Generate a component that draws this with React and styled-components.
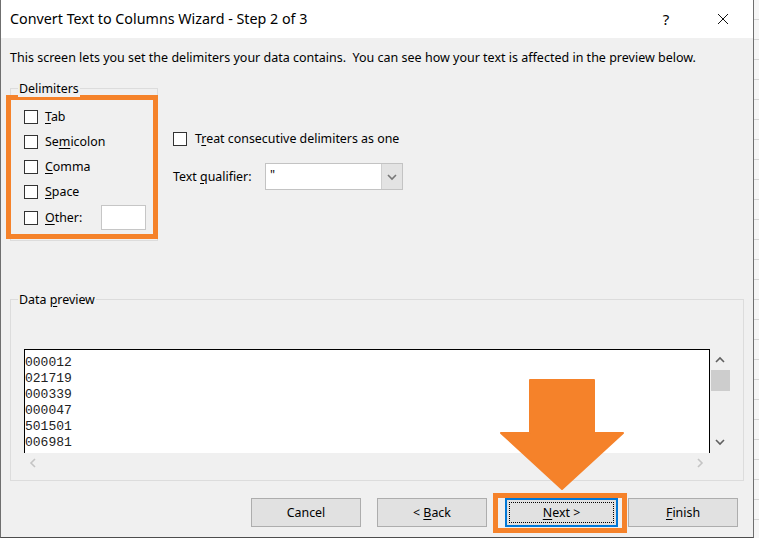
import React from 'react';
import styled, { createGlobalStyle } from 'styled-components';

const UI = '"Noto Sans", "Open Sans", "DejaVu Sans", sans-serif';
const MONO = '"Liberation Mono", "Courier New", monospace';
const ORANGE = '#f5822a';
const FS = '12.4px';

const Global = createGlobalStyle`
  html, body { margin: 0; padding: 0; }
  body { background: #ececec; font-family: ${UI}; color: #000; }
`;

const Screen = styled.div`
  position: relative;
  width: 759px;
  height: 538px;
  display: flex;
  overflow: hidden;
  background: #f6f6f6 repeating-linear-gradient(180deg, transparent 0 19px, #d4d4d4 19px 20px);
`;

const Dialog = styled.div`
  width: 754px;
  height: 538px;
  flex: none;
  box-sizing: border-box;
  border-left: 1px solid #6f6f6f;
  border-right: 1px solid #6f6f6f;
  border-bottom: 1px solid #4d4d4d;
  background: #f0f0f0;
  display: flex;
  flex-direction: column;
`;

const TitleBar = styled.div`
  height: 38px;
  flex: none;
  background: #fff;
  display: flex;
  align-items: center;
  padding-left: 9px;
`;

const Title = styled.div`
  font-size: 14.3px;
  line-height: 20px;
  flex: 1;
`;

const TitleButton = styled.div`
  width: 46px;
  height: 38px;
  display: flex;
  align-items: center;
  justify-content: center;
  font-size: 15px;
  margin-left: ${p => p.$ml || 0}px;
  margin-right: ${p => p.$mr || 0}px;
`;

const Body = styled.div`
  flex: 1;
  padding: 0 9px;
  display: flex;
  flex-direction: column;
`;

const Description = styled.div`
  margin-top: 11px;
  font-size: 12.5px;
  line-height: 17px;
  white-space: nowrap;
`;

const TopSection = styled.div`
  margin-top: 22px;
  display: flex;
  align-items: flex-start;
`;

const Group = styled.div`
  position: relative;
  box-sizing: border-box;
  width: ${p => p.$w}px;
  height: ${p => p.$h}px;
  border: 1px solid #dcdcdc;
  padding: ${p => p.$pad || '0'};
`;

const Legend = styled.div`
  position: absolute;
  top: -9px;
  left: 7px;
  padding: 0 1px;
  background: #f0f0f0;
  font-size: ${FS};
  line-height: 17px;
`;

const Highlight = styled.div`
  box-sizing: border-box;
  height: 144px;
  margin: 6px -1px 0 -5px;
  border: 5px solid ${ORANGE};
  padding: 4px 0 0 13px;
  display: grid;
  grid-template-rows: 25px 25px 25px 25px 27px;
`;

const CheckRow = styled.label`
  display: flex;
  align-items: center;
  gap: ${p => p.$gap || 7}px;
  font-size: ${FS};
  line-height: 17px;
`;

const Box = styled.span`
  width: 14px;
  height: 14px;
  box-sizing: border-box;
  border: 1px solid #333;
  background: #fff;
  flex: none;
`;

const Key = styled.span`
  text-decoration: underline;
  text-underline-offset: 2px;
`;

const OtherInput = styled.div`
  margin-left: auto;
  margin-right: 7px;
  width: 45px;
  height: 25px;
  box-sizing: border-box;
  border: 1px solid #c6c6c6;
  background: #fff;
`;

const Options = styled.div`
  margin-left: 15px;
  padding-top: 42px;
  display: flex;
  flex-direction: column;
`;

const TreatRow = styled(CheckRow)`
  height: 17px;
`;

const QualifierRow = styled.div`
  margin-top: 16px;
  height: 27px;
  display: flex;
  align-items: center;
  font-size: ${FS};
`;

const QualLabel = styled.span`
  width: 92px;
`;

const Select = styled.div`
  width: 138px;
  height: 27px;
  box-sizing: border-box;
  border: 1px solid #c3c3c3;
  background: #fff;
  display: flex;
`;

const SelectValue = styled.span`
  flex: 1;
  padding-left: 4px;
  font-size: ${FS};
  line-height: 22px;
`;

const DropButton = styled.span`
  width: 20px;
  background: #e3e3e3;
  border-left: 1px solid #cfcfcf;
  display: flex;
  align-items: center;
  justify-content: center;
`;

const PreviewGroup = styled(Group)`
  margin-top: 58px;
`;

const PreviewGrid = styled.div`
  display: grid;
  grid-template-columns: 686px 20px;
  grid-template-rows: 104px 20px;
`;

const TextBox = styled.div`
  box-sizing: border-box;
  border: 1px solid #000;
  border-bottom: none;
  background: #fff;
  padding-top: 5px;
  font-family: ${MONO};
  font-size: 13px;
  line-height: 16px;
  color: #222;
  overflow: hidden;
`;

const VScroll = styled.div`
  display: flex;
  flex-direction: column;
  align-items: center;
`;

const ArrowCell = styled.div`
  height: ${p => p.$h || 20}px;
  width: 100%;
  display: flex;
  align-items: center;
  justify-content: center;
`;

const Thumb = styled.div`
  width: 19px;
  height: 21px;
  margin-left: 1px;
  background: #cdcdcd;
`;

const Spacer = styled.div`
  flex: 1;
`;

const HScroll = styled.div`
  display: flex;
  align-items: center;
  justify-content: space-between;
  padding: 0 6px 0 5px;
`;

const ButtonRow = styled.div`
  margin-top: 17px;
  padding-right: 6px;
  display: flex;
  justify-content: flex-end;
  align-items: flex-start;
`;

const Button = styled.div`
  position: relative;
  width: ${p => p.$w || 110}px;
  height: 29px;
  box-sizing: border-box;
  margin-left: ${p => p.$ml || 0}px;
  border: ${p => (p.$focused ? '2px solid #0078d7' : '1px solid #adadad')};
  background: #e1e1e1;
  display: flex;
  align-items: center;
  justify-content: center;
  font-size: ${FS};
  white-space: pre;
  ${p =>
    p.$focused &&
    `&::after {
      content: '';
      position: absolute;
      inset: 2px;
      border: 1px dotted #000;
    }`}
`;

const NextHighlight = styled.div`
  margin: -5px 0 -5px ${p => p.$ml}px;
  border: 5px solid ${ORANGE};
  padding: 0 4px 1px 7px;
`;

const ArrowOverlay = styled.svg`
  position: absolute;
  left: 495px;
  top: 375px;
  width: 135px;
  height: 120px;
`;

const Chevron = ({ dir, color = '#606060' }) => {
  const d = {
    up: 'M1 6 L5 2 L9 6',
    down: 'M1 2 L5 6 L9 2',
    left: 'M6 1 L2 5 L6 9',
    right: 'M2 1 L6 5 L2 9',
  }[dir];
  const horiz = dir === 'left' || dir === 'right';
  return (
    <svg width={horiz ? 8 : 10} height={horiz ? 10 : 8} viewBox={horiz ? '0 0 8 10' : '0 0 10 8'}>
      <path d={d} fill="none" stroke={color} strokeWidth="1.6" />
    </svg>
  );
};

const rows = ['000012', '021719', '000339', '000047', '501501', '006981'];

export default function App() {
  return (
    <>
      <Global />
      <Screen>
        <Dialog>
          <TitleBar>
            <Title>Convert Text to Columns Wizard - Step 2 of 3</Title>
            <TitleButton>?</TitleButton>
            <TitleButton $ml={11} $mr={7}>
              <svg width="12" height="12" viewBox="0 0 12 12">
                <path d="M1 1 L11 11 M11 1 L1 11" stroke="#111" strokeWidth="1" fill="none" />
              </svg>
            </TitleButton>
          </TitleBar>
          <Body>
            <Description>
              This screen lets you set the delimiters your data contains.&nbsp; You can see how your text is affected in the preview below.
            </Description>
            <TopSection>
              <Group $w={148} $h={153}>
                <Legend>Delimiters</Legend>
                <Highlight>
                  <CheckRow><Box /><span><Key>T</Key>ab</span></CheckRow>
                  <CheckRow><Box /><span>Se<Key>m</Key>icolon</span></CheckRow>
                  <CheckRow><Box /><span><Key>C</Key>omma</span></CheckRow>
                  <CheckRow><Box /><span><Key>S</Key>pace</span></CheckRow>
                  <CheckRow><Box /><span><Key>O</Key>ther:</span><OtherInput /></CheckRow>
                </Highlight>
              </Group>
              <Options>
                <TreatRow $gap={8}><Box /><span>T<Key>r</Key>eat consecutive delimiters as one</span></TreatRow>
                <QualifierRow>
                  <QualLabel>Text <Key>q</Key>ualifier:</QualLabel>
                  <Select>
                    <SelectValue>"</SelectValue>
                    <DropButton><Chevron dir="down" color="#777" /></DropButton>
                  </Select>
                </QualifierRow>
              </Options>
            </TopSection>
            <PreviewGroup $w={734} $h={182} $pad="49px 0 0 13px">
              <Legend>Data <Key>p</Key>review</Legend>
              <PreviewGrid>
                <TextBox>
                  {rows.map(r => (
                    <div key={r}>{r}</div>
                  ))}
                </TextBox>
                <VScroll>
                  <ArrowCell $h={21}><Chevron dir="up" /></ArrowCell>
                  <Thumb />
                  <Spacer />
                  <ArrowCell $h={22}><Chevron dir="down" /></ArrowCell>
                </VScroll>
                <HScroll>
                  <Chevron dir="left" color="#c4c4c4" />
                  <Chevron dir="right" color="#c4c4c4" />
                </HScroll>
                <div />
              </PreviewGrid>
            </PreviewGroup>
            <ButtonRow>
              <Button>Cancel</Button>
              <Button $ml={16}><span>&lt; <Key>B</Key>ack</span></Button>
              <NextHighlight $ml={6}>
                <Button $w={113} $focused><span><Key>N</Key>ext &gt;</span></Button>
              </NextHighlight>
              <Button $ml={1}><Key>F</Key>inish</Button>
            </ButtonRow>
          </Body>
        </Dialog>
        <ArrowOverlay viewBox="495 375 135 120">
          <polygon
            points="530,380 594,380 594,433 623,433 562,489 501,433 530,433"
            fill={ORANGE}
            stroke={ORANGE}
            strokeWidth="2"
            strokeLinejoin="round"
          />
        </ArrowOverlay>
      </Screen>
    </>
  );
}
